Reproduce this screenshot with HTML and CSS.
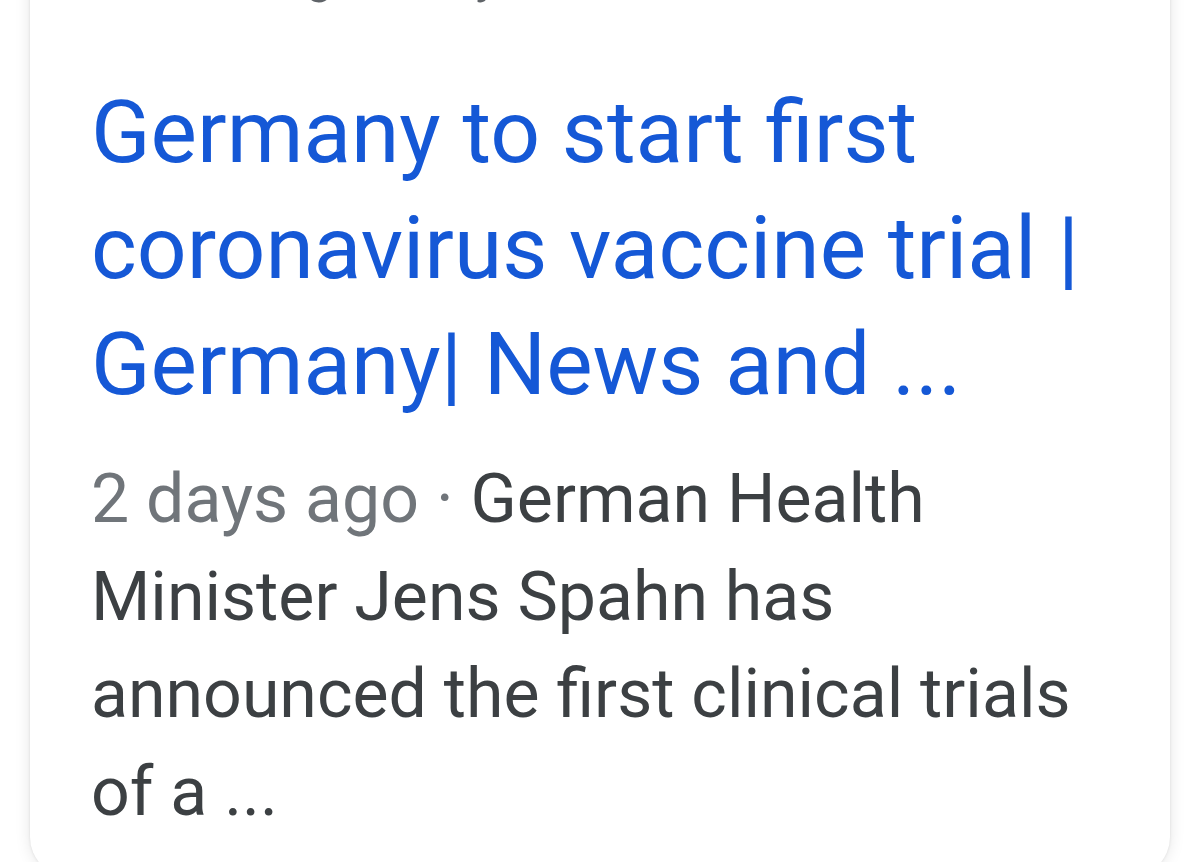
FILE: index.html
```html
<!DOCTYPE html>
<html lang="en">
<head>
<meta charset="utf-8">
<title>Search result</title>
<link rel="stylesheet" href="styles.css">
</head>
<body>
  <div class="page">
    <article class="card">
      <div class="source">dw.com › germany-to-start-first-coronavirus</div>
      <a class="title" href="#">Germany to start first coronavirus vaccine trial | Germany| News and ...</a>
      <p class="snippet"><span class="date">2 days ago</span><span class="sep"> · </span>German Health Minister Jens Spahn has announced the first clinical trials of a ...</p>
    </article>
  </div>
</body>
</html>
```

FILE: styles.css
```css
html, body {
  margin: 0;
  padding: 0;
  height: 100%;
  overflow: hidden;
  background: #ffffff;
}

.page {
  font-family: Roboto, "Noto Sans", Arial, sans-serif;
  padding: 0 30px;
}

.card {
  margin-top: -90px;
  padding: 30px 63px 36px 61px;
  background: #ffffff;
  border-radius: 40px;
  box-shadow: 0 0 16px rgba(0, 0, 0, 0.10), 0 0 3px rgba(0, 0, 0, 0.10);
}

.source {
  font-size: 50px;
  line-height: 70px;
  color: #5f6368;
  white-space: nowrap;
  overflow: hidden;
}

.title {
  display: block;
  margin-top: 64px;
  font-size: 87.5px;
  line-height: 116px;
  color: #1558d6;
  text-decoration: none;
}

.snippet {
  margin: 29px 0 0;
  font-size: 68px;
  line-height: 97.5px;
  color: #3c4043;
}

.date {
  color: #70757a;
}

.sep {
  color: #70757a;
}
```
